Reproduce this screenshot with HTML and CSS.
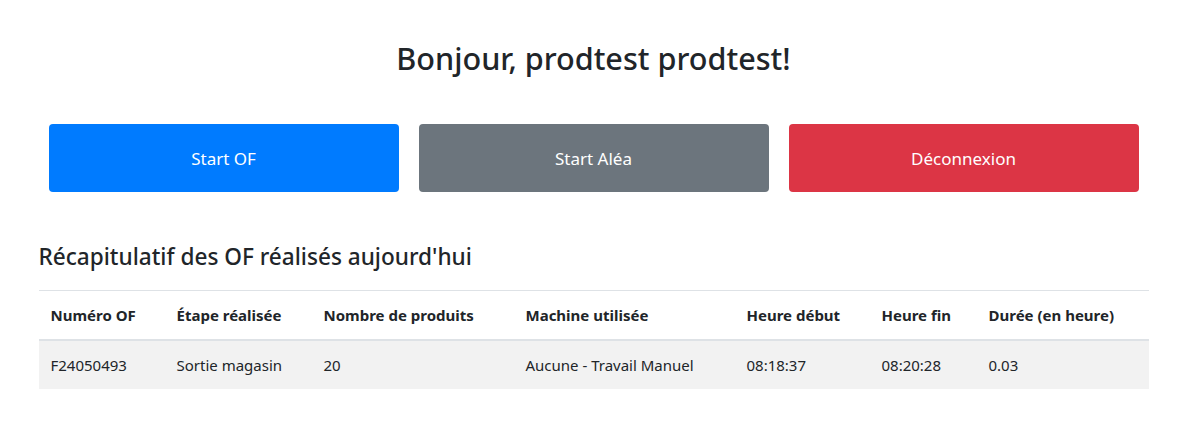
FILE: index.html
```html
<!DOCTYPE html>
<html lang="fr">
<head>
<meta charset="utf-8">
<title>Accueil</title>
<link rel="stylesheet" href="styles.css">
</head>
<body>
<main class="container">
  <h1 class="greeting">Bonjour, prodtest prodtest!</h1>
  <div class="actions">
    <a class="btn btn-primary" href="#">Start OF</a>
    <a class="btn btn-secondary" href="#">Start Aléa</a>
    <a class="btn btn-danger" href="#">Déconnexion</a>
  </div>
  <h2 class="section-title">Récapitulatif des OF réalisés aujourd'hui</h2>
  <table class="table">
    <colgroup>
      <col class="c1"><col class="c2"><col class="c3"><col class="c4"><col class="c5"><col class="c6"><col class="c7">
    </colgroup>
    <thead>
      <tr>
        <th>Numéro OF</th>
        <th>Étape réalisée</th>
        <th>Nombre de produits</th>
        <th>Machine utilisée</th>
        <th>Heure début</th>
        <th>Heure fin</th>
        <th>Durée (en heure)</th>
      </tr>
    </thead>
    <tbody>
      <tr>
        <td>F24050493</td>
        <td>Sortie magasin</td>
        <td>20</td>
        <td>Aucune - Travail Manuel</td>
        <td>08:18:37</td>
        <td>08:20:28</td>
        <td>0.03</td>
      </tr>
    </tbody>
  </table>
</main>
</body>
</html>
```

FILE: styles.css
```css
* { box-sizing: border-box; }
html, body { margin: 0; padding: 0; background: #fff; }
body {
  font-family: "Segoe UI", "Noto Sans", "Open Sans", Arial, sans-serif;
  color: #212529;
  font-size: 16px;
  line-height: 1.5;
}
.container {
  width: 1140px;
  margin: 0 auto;
  padding: 39px 15px 0;
}
.greeting {
  margin: 0;
  text-align: center;
  font-size: 30.6px;
  font-weight: 500;
  line-height: 38px;
}
.actions {
  display: grid;
  grid-template-columns: repeat(3, 1fr);
  gap: 20px;
  padding: 0 10px;
  margin-top: 47px;
}
.btn {
  display: flex;
  align-items: center;
  justify-content: center;
  height: 68px;
  padding-top: 2px;
  border-radius: 4px;
  color: #fff;
  text-decoration: none;
  font-size: 17px;
}
.btn-primary { background: #007bff; }
.btn-secondary { background: #6c757d; }
.btn-danger { background: #dc3545; }
.section-title {
  margin: 50px 0 19px;
  font-size: 22.6px;
  font-weight: 500;
  line-height: 29px;
}
.table {
  width: 100%;
  border-collapse: collapse;
  font-size: 15px;
  line-height: 24px;
}
.table th, .table td {
  padding: 12px;
  text-align: left;
  vertical-align: top;
  border-top: 1px solid #dee2e6;
}
.table thead th {
  font-weight: 700;
  border-bottom: 2px solid #dee2e6;
}
.table tbody tr { background: #f2f2f2; }
.c1 { width: 126px; }
.c2 { width: 147px; }
.c3 { width: 202px; }
.c4 { width: 221px; }
.c5 { width: 135px; }
.c6 { width: 107px; }
.c7 { width: 172px; }
```
